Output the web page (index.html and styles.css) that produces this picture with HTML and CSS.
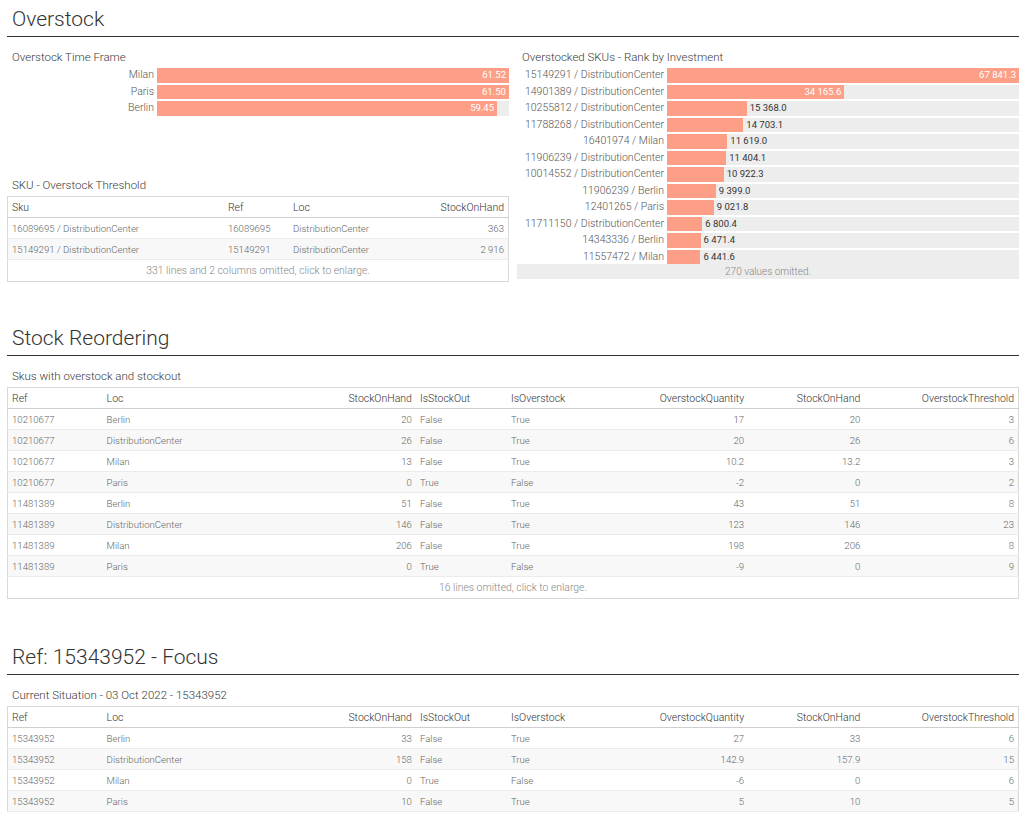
FILE: index.html
```html
<!DOCTYPE html>
<html>
<head>
<meta charset="utf-8">
<link rel="stylesheet" href="styles.css">
</head>
<body>
<div class="page">

<section class="section first">
  <h1 class="section-title">Overstock</h1>
  <div class="two-col">
    <div class="col">
      <div class="tile chart-tile">
        <div class="tile-label">Overstock Time Frame</div>
        <div class="bars">
          <div class="bar-row"><span class="bar-label">Milan</span><div class="track"><div class="bar" style="width:352px"><span class="val in">61.52</span></div></div></div>
          <div class="bar-row"><span class="bar-label">Paris</span><div class="track"><div class="bar" style="width:351.9px"><span class="val in">61.50</span></div></div></div>
          <div class="bar-row"><span class="bar-label">Berlin</span><div class="track"><div class="bar" style="width:340px"><span class="val in">59.45</span></div></div></div>
        </div>
      </div>
      <div class="tile">
        <div class="tile-label">SKU - Overstock Threshold</div>
        <table class="grid small">
          <colgroup><col style="width:216px"><col style="width:65px"><col style="width:119px"><col style="width:100px"></colgroup>
          <thead><tr><th>Sku</th><th>Ref</th><th>Loc</th><th class="r">StockOnHand</th></tr></thead>
          <tbody>
            <tr><td>16089695 / DistributionCenter</td><td>16089695</td><td>DistributionCenter</td><td class="r">363</td></tr>
            <tr><td>15149291 / DistributionCenter</td><td>15149291</td><td>DistributionCenter</td><td class="r">2 916</td></tr>
          </tbody>
          <tfoot><tr><td colspan="4">331 lines and 2 columns omitted, click to enlarge.</td></tr></tfoot>
        </table>
      </div>
    </div>
    <div class="col">
      <div class="tile">
        <div class="tile-label">Overstocked SKUs - Rank by Investment</div>
        <div class="bars">
          <div class="bar-row"><span class="bar-label">15149291 / DistributionCenter</span><div class="track"><div class="bar" style="width:352px"><span class="val in">67 841.3</span></div></div></div>
          <div class="bar-row"><span class="bar-label">14901389 / DistributionCenter</span><div class="track"><div class="bar" style="width:177.3px"><span class="val in">34 165.6</span></div></div></div>
          <div class="bar-row"><span class="bar-label">10255812 / DistributionCenter</span><div class="track"><div class="bar" style="width:79.7px"></div><span class="val out">15 368.0</span></div></div>
          <div class="bar-row"><span class="bar-label">11788268 / DistributionCenter</span><div class="track"><div class="bar" style="width:76.3px"></div><span class="val out">14 703.1</span></div></div>
          <div class="bar-row"><span class="bar-label">16401974 / Milan</span><div class="track"><div class="bar" style="width:60.3px"></div><span class="val out">11 619.0</span></div></div>
          <div class="bar-row"><span class="bar-label">11906239 / DistributionCenter</span><div class="track"><div class="bar" style="width:59.2px"></div><span class="val out">11 404.1</span></div></div>
          <div class="bar-row"><span class="bar-label">10014552 / DistributionCenter</span><div class="track"><div class="bar" style="width:56.7px"></div><span class="val out">10 922.3</span></div></div>
          <div class="bar-row"><span class="bar-label">11906239 / Berlin</span><div class="track"><div class="bar" style="width:48.8px"></div><span class="val out">9 399.0</span></div></div>
          <div class="bar-row"><span class="bar-label">12401265 / Paris</span><div class="track"><div class="bar" style="width:46.8px"></div><span class="val out">9 021.8</span></div></div>
          <div class="bar-row"><span class="bar-label">11711150 / DistributionCenter</span><div class="track"><div class="bar" style="width:35.3px"></div><span class="val out">6 800.4</span></div></div>
          <div class="bar-row"><span class="bar-label">14343336 / Berlin</span><div class="track"><div class="bar" style="width:33.6px"></div><span class="val out">6 471.4</span></div></div>
          <div class="bar-row"><span class="bar-label">11557472 / Milan</span><div class="track"><div class="bar" style="width:33.4px"></div><span class="val out">6 441.6</span></div></div>
        </div>
        <div class="omitted">270 values omitted.</div>
      </div>
    </div>
  </div>
</section>

<section class="section second">
  <h1 class="section-title">Stock Reordering</h1>
  <div class="tile">
    <div class="tile-label">Skus with overstock and stockout</div>
    <table class="grid wide">
      <colgroup><col style="width:95px"><col style="width:200px"><col style="width:113px"><col style="width:91px"><col style="width:120px"><col style="width:121px"><col style="width:116px"><col style="width:154px"></colgroup>
      <thead><tr><th>Ref</th><th>Loc</th><th class="r">StockOnHand</th><th>IsStockOut</th><th>IsOverstock</th><th class="r">OverstockQuantity</th><th class="r">StockOnHand</th><th class="r">OverstockThreshold</th></tr></thead>
      <tbody>
        <tr><td>10210677</td><td>Berlin</td><td class="r">20</td><td>False</td><td>True</td><td class="r">17</td><td class="r">20</td><td class="r">3</td></tr>
        <tr><td>10210677</td><td>DistributionCenter</td><td class="r">26</td><td>False</td><td>True</td><td class="r">20</td><td class="r">26</td><td class="r">6</td></tr>
        <tr><td>10210677</td><td>Milan</td><td class="r">13</td><td>False</td><td>True</td><td class="r">10.2</td><td class="r">13.2</td><td class="r">3</td></tr>
        <tr><td>10210677</td><td>Paris</td><td class="r">0</td><td>True</td><td>False</td><td class="r">-2</td><td class="r">0</td><td class="r">2</td></tr>
        <tr><td>11481389</td><td>Berlin</td><td class="r">51</td><td>False</td><td>True</td><td class="r">43</td><td class="r">51</td><td class="r">8</td></tr>
        <tr><td>11481389</td><td>DistributionCenter</td><td class="r">146</td><td>False</td><td>True</td><td class="r">123</td><td class="r">146</td><td class="r">23</td></tr>
        <tr><td>11481389</td><td>Milan</td><td class="r">206</td><td>False</td><td>True</td><td class="r">198</td><td class="r">206</td><td class="r">8</td></tr>
        <tr><td>11481389</td><td>Paris</td><td class="r">0</td><td>True</td><td>False</td><td class="r">-9</td><td class="r">0</td><td class="r">9</td></tr>
      </tbody>
      <tfoot><tr><td colspan="8">16 lines omitted, click to enlarge.</td></tr></tfoot>
    </table>
  </div>
</section>

<section class="section third">
  <h1 class="section-title">Ref: 15343952 - Focus</h1>
  <div class="tile">
    <div class="tile-label">Current Situation - 03 Oct 2022 - 15343952</div>
    <table class="grid wide">
      <colgroup><col style="width:95px"><col style="width:200px"><col style="width:113px"><col style="width:91px"><col style="width:120px"><col style="width:121px"><col style="width:116px"><col style="width:154px"></colgroup>
      <thead><tr><th>Ref</th><th>Loc</th><th class="r">StockOnHand</th><th>IsStockOut</th><th>IsOverstock</th><th class="r">OverstockQuantity</th><th class="r">StockOnHand</th><th class="r">OverstockThreshold</th></tr></thead>
      <tbody>
        <tr><td>15343952</td><td>Berlin</td><td class="r">33</td><td>False</td><td>True</td><td class="r">27</td><td class="r">33</td><td class="r">6</td></tr>
        <tr><td>15343952</td><td>DistributionCenter</td><td class="r">158</td><td>False</td><td>True</td><td class="r">142.9</td><td class="r">157.9</td><td class="r">15</td></tr>
        <tr><td>15343952</td><td>Milan</td><td class="r">0</td><td>True</td><td>False</td><td class="r">-6</td><td class="r">0</td><td class="r">6</td></tr>
        <tr><td>15343952</td><td>Paris</td><td class="r">10</td><td>False</td><td>True</td><td class="r">5</td><td class="r">10</td><td class="r">5</td></tr>
      </tbody>
    </table>
  </div>
</section>

</div>
</body>
</html>
```

FILE: styles.css
```css
html, body {
  margin: 0;
  padding: 0;
  background: #ffffff;
}

body {
  font-family: Roboto, "Liberation Sans", sans-serif;
  color: #333;
}

.page {
  width: 1012px;
  padding: 0 7px;
}

.section-title {
  margin: 0;
  padding: 6px 0 4px 5px;
  font-size: 21px;
  line-height: 26px;
  font-weight: 300;
  color: #333;
  border-bottom: 1px solid #333;
}

.section.second { margin-top: 37px; }
.section.third { margin-top: 39px; }

.two-col {
  display: grid;
  grid-template-columns: 502px 502px;
  column-gap: 8px;
}

.tile {
  padding-top: 13px;
}

.chart-tile {
  height: 115px;
}

.tile-label {
  padding-left: 5px;
  font-size: 11.5px;
  line-height: 14px;
  font-weight: 300;
  color: #3a3a3a;
  margin-bottom: 4px;
}

.bars {
  display: flex;
  flex-direction: column;
  gap: 2px;
}

.bar-row {
  display: flex;
  height: 14.5px;
  align-items: stretch;
}

.bar-label {
  width: 147px;
  margin-right: 3px;
  text-align: right;
  font-size: 10.5px;
  line-height: 14.5px;
  font-weight: 300;
  color: #555;
  white-space: nowrap;
}

.track {
  width: 352px;
  background: #ededed;
  display: flex;
  align-items: stretch;
}

.bar {
  background: #fd9f86;
  display: flex;
  justify-content: flex-end;
  align-items: center;
}

.val {
  font-size: 9.5px;
  line-height: 14.5px;
  white-space: nowrap;
}

.val.in {
  color: #fff;
  padding-right: 3px;
}

.val.out {
  color: #333;
  padding-left: 3px;
}

.omitted {
  height: 15px;
  background: #ededed;
  text-align: center;
  font-size: 10px;
  line-height: 15px;
  color: #888;
  font-weight: 300;
}

.grid {
  border-collapse: collapse;
  table-layout: fixed;
  border: 1px solid #d9d9d9;
}

.grid.small { width: 502px; }
.grid.wide { width: 1012px; }

.grid th {
  font-size: 10.5px;
  font-weight: 300;
  color: #333;
  text-align: left;
  height: 20px;
  padding: 0 4px;
  border-bottom: 1px solid #cfcfcf;
  white-space: nowrap;
}

.grid td {
  font-size: 9.6px;
  font-weight: 300;
  color: #666;
  height: 20px;
  padding: 0 4px;
  border-bottom: 1px solid #ebebeb;
  white-space: nowrap;
  overflow: hidden;
}

.grid tbody tr:nth-child(even) td {
  background: #f8f8f8;
}

.grid .r { text-align: right; }

.grid tfoot td {
  text-align: center;
  font-size: 10.4px;
  color: #888;
  height: 21px;
  border-bottom: none;
}
```
